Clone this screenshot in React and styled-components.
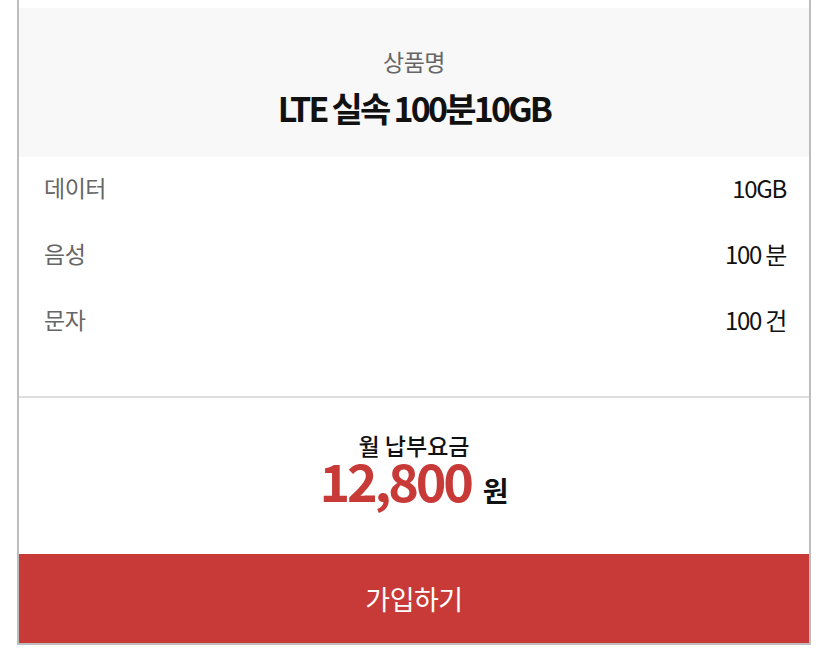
import React from "react";
import styled, { createGlobalStyle } from "styled-components";

const Global = createGlobalStyle`
  html, body { margin: 0; padding: 0; background: #fff; }
  body { font-family: "Noto Sans CJK KR", "Noto Sans", sans-serif; color: #111; }
`;

const Page = styled.div`
  width: 828px;
  height: 663px;
  overflow: hidden;
`;

const Card = styled.div`
  margin-left: 17px;
  width: 790px;
  border: 2px solid #bdbdbd;
  border-top: none;
  padding-top: 8px;
  background: #fff;
`;

const Header = styled.div`
  height: 149px;
  background: #f8f8f8;
  display: flex;
  flex-direction: column;
  align-items: center;
`;

const HeaderLabel = styled.div`
  margin-top: 38px;
  font-size: 23px;
  line-height: 30px;
  color: #666;
  letter-spacing: -0.5px;
`;

const Title = styled.div`
  margin-top: 14px;
  font-size: 34px;
  line-height: 36px;
  font-weight: 700;
  color: #111;
  letter-spacing: -2.8px;
`;

const Specs = styled.div`
  display: flex;
  flex-direction: column;
  gap: 36px;
  padding: 15px 23px 62px 25px;
`;

const Row = styled.div`
  display: flex;
  justify-content: space-between;
  align-items: center;
  height: 30px;
`;

const Label = styled.span`
  font-size: 23px;
  color: #666;
  letter-spacing: -0.5px;
`;

const Value = styled.span`
  font-size: 24px;
  color: #111;
  letter-spacing: -1.3px;
`;

const Price = styled.div`
  border-top: 2px solid #dedede;
  height: 156px;
  display: flex;
  flex-direction: column;
  align-items: center;
`;

const PriceLabel = styled.div`
  margin-top: 32px;
  font-size: 23px;
  line-height: 30px;
  font-weight: 500;
  color: #111;
`;

const Amount = styled.div`
  display: flex;
  align-items: baseline;
  gap: 12px;
  height: 39px;
`;

const Number = styled.span`
  font-size: 52px;
  line-height: 39px;
  font-weight: 700;
  color: #c73a38;
  letter-spacing: -3.2px;
`;

const Unit = styled.span`
  font-size: 28px;
  line-height: 39px;
  font-weight: 700;
  color: #111;
`;

const Button = styled.button`
  display: flex;
  align-items: center;
  justify-content: center;
  width: 100%;
  height: 89px;
  border: none;
  background: #c73a37;
  color: #fff;
  font-family: inherit;
  font-size: 27px;
  font-weight: 400;
  letter-spacing: -0.5px;
  padding: 0;
  cursor: pointer;
`;

const specs = [
  ["데이터", "10GB"],
  ["음성", "100 분"],
  ["문자", "100 건"],
];

export default function App() {
  return (
    <Page>
      <Global />
      <Card>
        <Header>
          <HeaderLabel>상품명</HeaderLabel>
          <Title>LTE 실속 100분10GB</Title>
        </Header>
        <Specs>
          {specs.map(([k, v]) => (
            <Row key={k}>
              <Label>{k}</Label>
              <Value>{v}</Value>
            </Row>
          ))}
        </Specs>
        <Price>
          <PriceLabel>월 납부요금</PriceLabel>
          <Amount>
            <Number>12,800</Number>
            <Unit>원</Unit>
          </Amount>
        </Price>
        <Button>가입하기</Button>
      </Card>
    </Page>
  );
}
